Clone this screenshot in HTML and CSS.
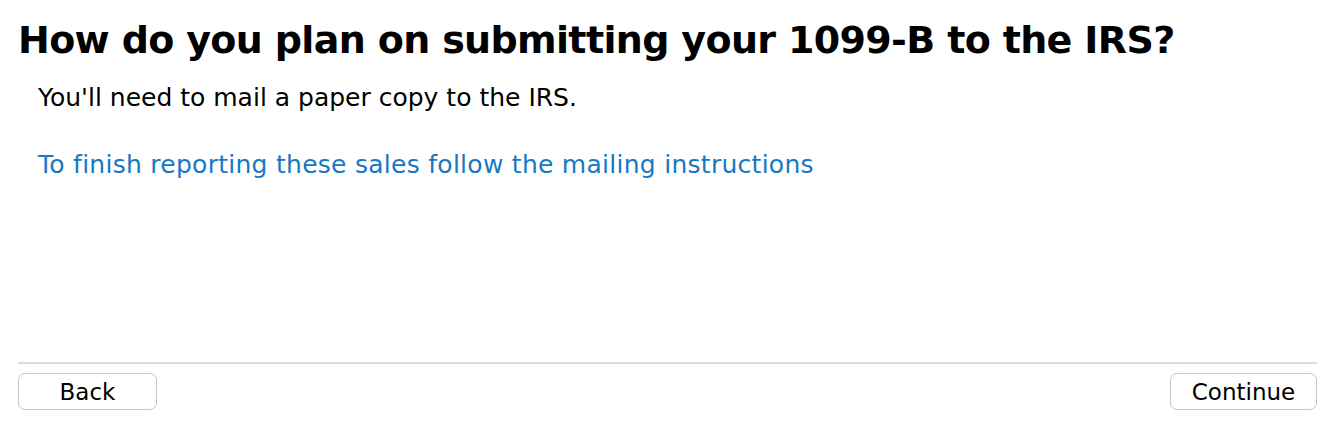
FILE: index.html
```html
<!DOCTYPE html>
<html lang="en">
<head>
<meta charset="utf-8">
<title>Submit 1099-B</title>
<link rel="stylesheet" href="styles.css">
</head>
<body>
<div class="page">
  <main class="content">
    <h1 class="title">How do you plan on submitting your 1099-B to the IRS?</h1>
    <p class="note">You'll need to mail a paper copy to the IRS.</p>
    <a class="link" href="#">To finish reporting these sales follow the mailing instructions</a>
  </main>
  <footer class="footer">
    <button class="btn btn-back" type="button">Back</button>
    <button class="btn btn-continue" type="button">Continue</button>
  </footer>
</div>
</body>
</html>
```
FILE: styles.css
```css
html, body {
  margin: 0;
  padding: 0;
  background: #ffffff;
}
body {
  font-family: "DejaVu Sans", "Noto Sans", sans-serif;
  color: #000;
}
.page {
  width: 1334px;
  height: 432px;
  box-sizing: border-box;
  padding: 0 17px 0 18px;
  display: flex;
  flex-direction: column;
}
.content {
  flex: 1;
  display: flex;
  flex-direction: column;
  align-items: flex-start;
}
.title {
  margin: 17px 0 0 0;
  font-size: 38px;
  font-weight: bold;
  line-height: 46px;
  letter-spacing: -0.65px;
}
.note {
  margin: 20px 0 0 20px;
  font-size: 25px;
  line-height: 30px;
}
.link {
  margin: 37px 0 0 20px;
  font-size: 25px;
  line-height: 30px;
  letter-spacing: 0.27px;
  color: #1778c4;
  text-decoration: none;
}
.footer {
  border-top: 2px solid #dcdde0;
  margin-bottom: 22px;
  padding-top: 9px;
  display: flex;
  justify-content: space-between;
}
.btn {
  height: 37px;
  box-sizing: border-box;
  border: 1.5px solid #c6c6c6;
  border-radius: 7px;
  background: #fff;
  font-family: "DejaVu Sans", "Noto Sans", sans-serif;
  font-size: 23px;
  color: #000;
  padding: 0;
}
.btn-back {
  width: 139px;
}
.btn-continue {
  width: 147px;
}
```
